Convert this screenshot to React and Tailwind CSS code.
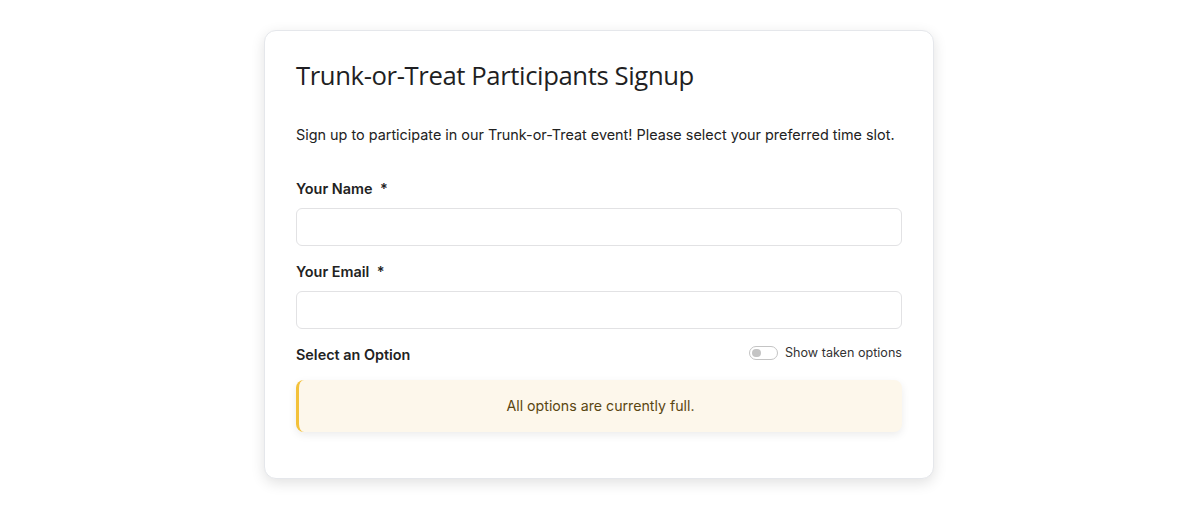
import React, { useState } from 'react';

const App = () => {
    const [showTaken, setShowTaken] = useState(false);

    return (
        <div className="min-h-screen bg-white flex justify-center pt-[30px]" style={{ fontFamily: 'Inter, "Noto Sans", sans-serif' }}>
            <div className="w-[670px] h-[449px] bg-white border border-gray-200 rounded-xl shadow-[0_4px_14px_rgba(0,0,0,0.12)] pl-[31px] pr-[31px] pt-[28px] -ml-[2px]">
                <h1 className="text-[25.7px] leading-[34px] text-[#1f1f23] tracking-[-0.4px]" style={{ fontFamily: '"Open Sans", Inter, sans-serif' }}>
                    Trunk-or-Treat Participants Signup
                </h1>

                <p className="mt-[31px] text-[14.4px] leading-[22px] text-[#222] whitespace-nowrap">
                    Sign up to participate in our Trunk-or-Treat event! Please select your preferred time slot.
                </p>

                <div className="mt-[32px]">
                    <label className="block text-[14.4px] font-semibold text-[#222] leading-[22px]">
                        Your Name <span className="ml-1">*</span>
                    </label>
                    <input
                        type="text"
                        className="mt-[8px] w-full h-[38px] rounded-md border border-[#e2e2e4] px-3 outline-none"
                    />
                </div>

                <div className="mt-[15px]">
                    <label className="block text-[14.4px] font-semibold text-[#222] leading-[22px]">
                        Your Email <span className="ml-1">*</span>
                    </label>
                    <input
                        type="email"
                        className="mt-[8px] w-full h-[38px] rounded-md border border-[#e2e2e4] px-3 outline-none"
                    />
                </div>

                <div className="mt-[15px] flex items-center justify-between">
                    <span className="text-[14.4px] font-semibold text-[#222] leading-[22px]">Select an Option</span>
                    <button
                        type="button"
                        onClick={() => setShowTaken(!showTaken)}
                        className="flex items-center gap-[7px] -mt-[3px]"
                    >
                        <span className="relative w-[29px] h-[14px] rounded-full border border-[#c4c4c4] bg-white">
                            <span className="absolute left-[2px] top-[2px] w-[9px] h-[8px] rounded-full bg-[#c4c4c4]" />
                        </span>
                        <span className="text-[12.6px] text-[#333]">Show taken options</span>
                    </button>
                </div>

                <div className="mt-[14px] h-[52px] rounded-lg bg-[#fdf7eb] border-l-[3px] border-[#f3c13a] shadow-[0_3px_8px_rgba(0,0,0,0.08)] flex items-center justify-center">
                    <span className="text-[14.2px] text-[#5a4612]">All options are currently full.</span>
                </div>
            </div>
        </div>
    );
};

export default App;
